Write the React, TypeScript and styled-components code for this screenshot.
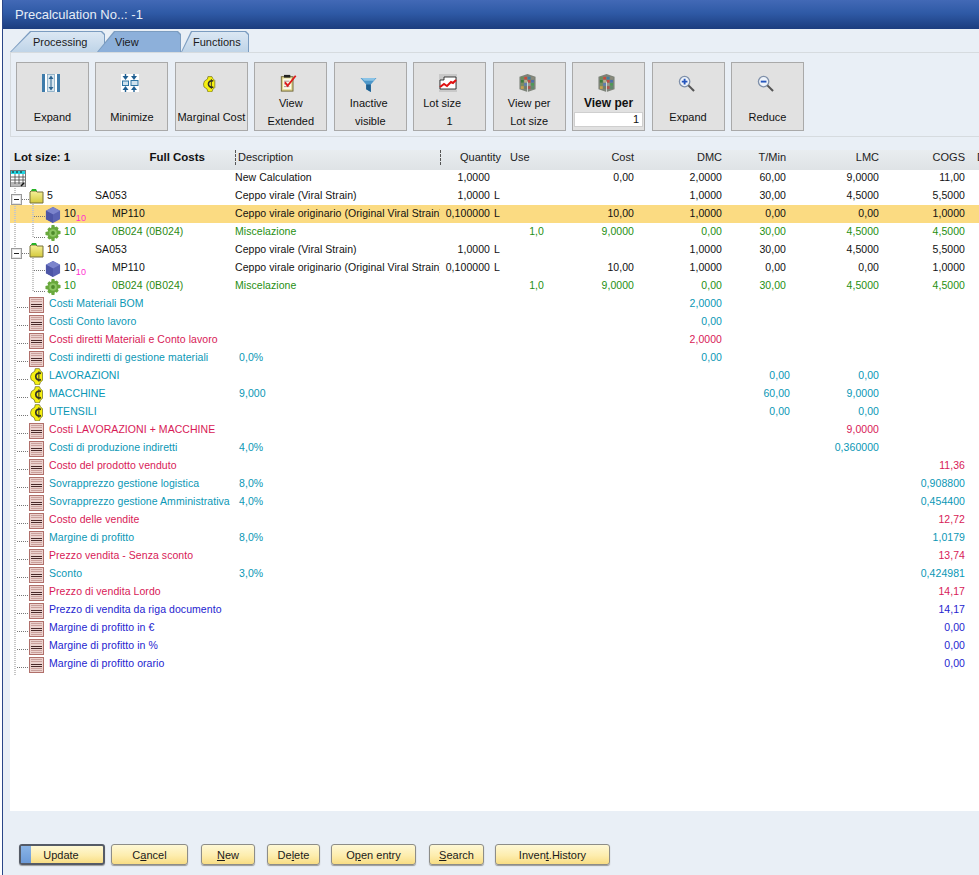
import React from 'react'
import styled, { createGlobalStyle } from 'styled-components'

const GlobalStyle = createGlobalStyle`
    html, body {
        margin: 0;
        padding: 0;
        height: 875px;
        overflow: hidden;
        background: #fff;
        font-family: "Liberation Sans", Arial, sans-serif;
    }
`;

const COLUMNS = '225px 205px 50px 15px 39px 90px 88px 64px 93px 86px 1fr';

const Page = styled.div`
    height: 875px;
    margin-left: 2px;
    border-left: 1px solid #2a4688;
    background: #e9eff6;
    display: flex;
    flex-direction: column;
    overflow: hidden;
`;

const TitleBar = styled.div`
    height: 29px;
    flex: none;
    padding-left: 12px;
    display: flex;
    align-items: center;
    color: #e6edf6;
    font-size: 13px;
    background: linear-gradient(#4269b6, #2f5aa6 45%, #1c3d7e);
`;

const TabStrip = styled.div`
    height: 21px;
    flex: none;
    margin-top: 2px;
    padding-left: 7px;
    display: flex;
    align-items: stretch;
`;

const Tab = styled.div<{ $active?: boolean; $width: number; $overlap?: number; $slant: number; $pad: number }>`
    position: relative;
    width: ${p => p.$width}px;
    margin-left: ${p => -(p.$overlap || 0)}px;
    z-index: ${p => (p.$active ? 2 : 1)};
    background: #7b9cc0;
    clip-path: polygon(0 100%, ${p => p.$slant}px 0, calc(100% - 3px) 0, 100% 3px, 100% 100%);
    font-size: 11px;
    color: #1a1a1a;

    span {
        position: absolute;
        inset: 1px 1px 0 1px;
        display: flex;
        align-items: center;
        padding-left: ${p => p.$pad}px;
        background: ${p => (p.$active ? '#8db0da' : 'linear-gradient(#dbe7f3, #bfd4e8)')};
        clip-path: polygon(0 100%, ${p => p.$slant}px 0, calc(100% - 3px) 0, 100% 3px, 100% 100%);
    }
`;

const ToolPanel = styled.div`
    height: 85px;
    flex: none;
    margin-left: 7px;
    border: 1px solid #d6dbdf;
    border-right: none;
    box-sizing: border-box;
    padding: 9px 0 0 5px;
    display: flex;
    gap: 6.45px;
    align-items: flex-start;
`;

const ToolButton = styled.div`
    width: 73px;
    height: 69px;
    box-sizing: border-box;
    border: 1px solid #a9a9a9;
    background: #e1e1e1;
    display: flex;
    flex-direction: column;
    align-items: center;
    font-size: 11px;
    color: #111;
`;

const IconZone = styled.div`
    height: 31px;
    flex: none;
    padding: 0 4px 2px 0;
    box-sizing: border-box;
    display: flex;
    justify-content: center;
    align-items: flex-end;
`;

const Labels = styled.div<{ $single?: boolean }>`
    padding-top: ${p => (p.$single ? 14 : 0)}px;
    display: flex;
    flex-direction: column;
    align-items: center;
    line-height: 18px;
`;

const LabelLine = styled.div<{ $shift?: number; $bold?: boolean }>`
    margin-left: ${p => p.$shift || 0}px;
    font-weight: ${p => (p.$bold ? 700 : 400)};
    font-size: ${p => (p.$bold ? 12 : 11)}px;
    white-space: nowrap;
`;

const SizeInput = styled.div`
    width: 69px;
    height: 15px;
    background: #fff;
    border: 1px solid #cfcfcf;
    box-sizing: border-box;
    text-align: right;
    padding-right: 3px;
    font-size: 11px;
    line-height: 13px;
`;

const GridArea = styled.div`
    flex: none;
    height: 661px;
    margin: 13px 0 0 7px;
    background: #fff;
    display: flex;
    flex-direction: column;
    overflow: hidden;
`;

const HeaderRow = styled.div`
    height: 20px;
    flex: none;
    display: grid;
    grid-template-columns: ${COLUMNS};
    align-items: start;
    font-size: 11px;
    line-height: 14px;
    color: #222;
    background: linear-gradient(#e9edf0, #dfe3e6);
`;

const HeaderCell = styled.div<{ $right?: boolean; $dash?: boolean; $pad?: number; $over?: number }>`
    text-align: ${p => (p.$right ? 'right' : 'left')};
    white-space: nowrap;
    padding-left: ${p => p.$pad || 0}px;
    margin-right: ${p => -(p.$over || 0)}px;
    ${p => p.$dash && 'border-left: 1px dashed #555; padding-bottom: 1px;'}
`;

const HeaderLead = styled.div`
    display: flex;
    justify-content: space-between;
    padding: 0 30px 0 4px;
    font-weight: 700;
    font-size: 11.5px;
    color: #111;
`;

const RowList = styled.div`
    position: relative;
    margin-top: -2px;
    font-size: 10.5px;
    letter-spacing: .06px;

    &::before {
        content: "";
        position: absolute;
        left: 4px;
        top: 20px;
        width: 2px;
        height: 487px;
        background: repeating-linear-gradient(#c6c6c6 0 1px, transparent 1px 2px);
    }
`;

const Row = styled.div<{ $selected?: boolean; $color?: string }>`
    height: 18px;
    display: grid;
    grid-template-columns: ${COLUMNS};
    align-items: center;
    color: ${p => p.$color || '#111'};
    white-space: nowrap;
    ${p => p.$selected && `
        background: linear-gradient(transparent 1px, #fbdb82 1px);
        box-shadow: 0 1px 0 #fbdb82;
    `}
`;

const NameCell = styled.div<{ $indent: number }>`
    position: relative;
    height: 18px;
    padding-left: ${p => p.$indent}px;
    display: flex;
    align-items: center;
`;

const RowIcon = styled.span<{ $top: number; $width?: number }>`
    display: flex;
    justify-content: center;
    align-items: flex-start;
    height: 18px;
    box-sizing: border-box;
    padding-top: ${p => p.$top}px;
    width: ${p => (p.$width ? `${p.$width}px` : 'auto')};
    position: relative;
    flex: none;
`;

const OrderCell = styled.span<{ $color?: string }>`
    width: 48px;
    margin-left: 3px;
    flex: none;
    color: ${p => p.$color || 'inherit'};
`;

const SubIndex = styled.sub`
    color: #ff2fd0;
    font-size: 9px;
    line-height: 0;
    vertical-align: -4px;
`;

const CodeCell = styled.span<{ $color?: string }>`
    color: ${p => p.$color || 'inherit'};
`;

const SummaryLabel = styled.span`
    margin-left: 5px;
`;

const DescCell = styled.div<{ $color?: string; $pad?: boolean }>`
    overflow: hidden;
    color: ${p => p.$color || 'inherit'};
    padding-left: ${p => (p.$pad ? 4 : 0)}px;
`;

const NumCell = styled.div<{ $color?: string; $outdent?: number }>`
    text-align: right;
    color: ${p => p.$color || 'inherit'};
    margin-right: ${p => -(p.$outdent || 0)}px;
`;

const UnitCell = styled.div`
    padding-left: 4px;
`;

const VLine = styled.i<{ $x: number; $height: number }>`
    position: absolute;
    left: ${p => p.$x}px;
    top: 0;
    width: 2px;
    height: ${p => p.$height}px;
    background: repeating-linear-gradient(#c6c6c6 0 1px, transparent 1px 2px);
`;

const HLine = styled.i<{ $x: number; $width: number; $y: number }>`
    position: absolute;
    left: ${p => p.$x}px;
    top: ${p => p.$y}px;
    width: ${p => p.$width}px;
    height: 1px;
    background: repeating-linear-gradient(90deg, #777 0 1px, transparent 1px 2px);
`;

const ExpandBox = styled.i`
    position: absolute;
    left: 1px;
    top: 8px;
    width: 11px;
    height: 11px;
    box-sizing: border-box;
    background: #fff;
    border: 1px solid #9a9a9a;
    box-shadow: inset 0 0 0 1px #e4e4e4;

    &::after {
        content: "";
        position: absolute;
        left: 2px;
        right: 2px;
        top: 4px;
        height: 1px;
        background: #222;
    }
`;

const Footer = styled.div`
    flex: 1;
    padding: 33px 0 0 16px;
    display: flex;
    align-items: flex-start;
`;

const FootButton = styled.div<{ $width: number; $gap: number; $primary?: boolean }>`
    position: relative;
    width: ${p => p.$width}px;
    height: 21px;
    margin-right: ${p => p.$gap}px;
    box-sizing: border-box;
    border: ${p => (p.$primary ? '2px solid #555b66' : '1px solid #8d8d88')};
    border-radius: 3px;
    background: linear-gradient(#fef8d6, #fdedae 55%, #f8dd84);
    box-shadow: 0 1px 1px #999;
    display: flex;
    align-items: center;
    justify-content: center;
    font-size: 11px;
    color: #1a1a1a;
    ${p => p.$primary && `
        &::before {
            content: "";
            position: absolute;
            left: 0;
            top: 0;
            bottom: 0;
            width: 10px;
            background: linear-gradient(#8ab4e6, #6b9ad8);
        }
    `}
`;

const FootLabel = styled.span<{ $shift?: number }>`
    position: relative;
    margin-left: ${p => p.$shift || 0}px;
`;

/* toolbar icons */
const ExpandIcon = () => (
    <svg width="18" height="18" viewBox="0 0 18 18">
        <rect width="18" height="18" fill="#fff" />
        <rect width="3" height="18" fill="#3f7cab" />
        <rect x="15" width="3" height="18" fill="#3f7cab" />
        <rect x="5.500" y=".5" width="7" height="17" fill="#d8e6ef" stroke="#7fa5bf" strokeWidth=".8" />
        <path d="M9 1.500 6.500 5h5zM9 16.500 6.500 13h5zM8.500 5h1v8h-1z" fill="#2a628f" />
    </svg>
)

const MinimizeIcon = () => (
    <svg width="18" height="18" viewBox="0 0 18 18">
        <rect width="18" height="18" fill="#fff" />
        <path d="M3.800 0h1.400v2h2.300L4.500 6 1.500 2h2.300zM12.300 0h1.400v2H16l-3 4-3-4h2.300zM3.800 18h1.400v-2h2.300l-3-4-3 4h2.300zM12.300 18h1.400v-2H16l-3-4-3 4h2.300z" fill="#1f5f92" />
        <rect x="1.500" y="7" width="6" height="4.500" fill="#cfe2ee" stroke="#2f74a3" />
        <rect x="10" y="6.500" width="7" height="5" fill="#cfe2ee" stroke="#2f74a3" />
    </svg>
)

const CoinIcon = ({ height = 15 }: { height?: number }) => (
    <svg width={height * 0.8} height={height} viewBox="0 0 13 16">
        <path d="M5 .5h4l1 2 2 2v7l-2 2-1 2.500H5l-1-3-3-2-.5-3 1-3 3-2z" fill="#f6f010" stroke="#6a6a20" strokeWidth=".7" />
        <path d="M10.500 5C8 4 5.500 5.500 5.500 8s2.500 4 5 3" fill="none" stroke="#2e2e26" strokeWidth="1.600" />
        <path d="M8.500 3v10" stroke="#2e2e26" strokeWidth=".9" />
    </svg>
)

const ChecklistIcon = () => (
    <svg width="17" height="18" viewBox="0 0 18 20">
        <rect x="1" y="3" width="13" height="16" fill="#e0d68e" stroke="#6b6133" />
        <rect x="3" y="5" width="9" height="12" fill="#fbfae8" />
        <rect x="4" y="1" width="7" height="3" fill="#222" />
        <path d="M4 8h6M4 11h4M4 14h6" stroke="#a88" />
        <path d="M5 9l3 4L17 2" fill="none" stroke="#dd1a1a" strokeWidth="2" />
    </svg>
)

const FunnelIcon = () => (
    <svg width="17" height="15" viewBox="0 0 17 16">
        <path d="M0 1h17l-6 7v8l-5-3V8z" fill="#4d97c9" />
        <path d="M1 1h15l-2 3H4z" fill="#8ac3e6" />
        <path d="M6 8h5v8l-5-3z" fill="#1f5f90" />
    </svg>
)

const ChartIcon = () => (
    <svg width="18" height="18" viewBox="0 0 18 18">
        <rect width="18" height="18" fill="#c9c9c9" />
        <path d="M1 15V6h4V3h12v12z" fill="#fff" stroke="#111" strokeWidth=".8" />
        <path d="M1 13l4-3 3 2 4-4 2 1 3-3" fill="none" stroke="#e01010" strokeWidth="2" />
    </svg>
)

const MOSAIC = [
    '#6a8f5a', '#c94a3a', '#3e7f9e', '#8a8a7a',
    '#3e7d3c', '#b5b08a', '#c24a44', '#4d6fa8',
    '#78905e', '#5b7fb5', '#9a9a8a', '#4a9a55',
    '#c8a24a', '#6e7f6a', '#b0534a', '#5e8a6c',
]

const MosaicIcon = () => (
    <svg width="17" height="18" viewBox="0 0 17 19">
        <path d="M8.500 0 17 3v13l-8.500 3L0 16V3z" fill="#7d8379" />
        {MOSAIC.map((color, i) => (
            <rect key={i} x={1.500 + (i % 4) * 3.600} y={3 + Math.floor(i / 4) * 3.300} width="3" height="2.800" fill={color} />
        ))}
        <path d="M8.500 8v11" stroke="#eee" strokeWidth=".8" />
    </svg>
)

const LensIcon = ({ minus }: { minus?: boolean }) => (
    <svg width="17" height="17" viewBox="0 0 18 18">
        <circle cx="7" cy="7" r="5.500" fill="#eef3fa" stroke="#7f90aa" strokeWidth="1.400" />
        <path d="M11 11l6 6" stroke="#555" strokeWidth="2.200" />
        <path d={minus ? 'M4 7h6' : 'M4 7h6M7 4v6'} stroke="#2455bd" strokeWidth="2" />
    </svg>
)

/* tree icons */
const GridIcon = () => (
    <svg width="16" height="17" viewBox="0 0 16 17">
        <rect x=".5" y=".5" width="15" height="16" fill="#fff" stroke="#777" />
        <rect x="1" y="1" width="14" height="3" fill="#22d4e0" />
        <path d="M2 2h2M6 2h2M10 2h2" stroke="#111" />
        <path d="M1 7h14M1 10h14M1 13h14M5 4v10M9 4v10M13 4v10" stroke="#444" strokeWidth=".8" />
        <rect x="1" y="14" width="14" height="2.500" fill="#bbb" />
        <path d="M11 16l3-3" stroke="#111" strokeWidth="1.500" />
    </svg>
)

const FolderIcon = () => (
    <svg width="15" height="16" viewBox="0 0 15 16">
        <defs>
            <linearGradient id="folderFill" x1="0" y1="0" x2="0" y2="1">
                <stop offset="0" stopColor="#f7f19a" />
                <stop offset="1" stopColor="#d4c93c" />
            </linearGradient>
        </defs>
        <path d="M1 4l1-1h5l1 1h6v11H1z" fill="url(#folderFill)" stroke="#77713a" />
        <path d="M2 3l1-2h4l1 2z" fill="#27b327" />
    </svg>
)

const CubeIcon = () => (
    <svg width="16" height="16" viewBox="0 0 16 17">
        <path d="M8 0l7.500 4v9L8 17 .5 13V4z" fill="#5a63b3" />
        <path d="M8 0l7.500 4L8 8 .5 4z" fill="#7b84cc" />
        <path d="M8 8v9L.5 13V4z" fill="#4c55a6" />
    </svg>
)

const GearIcon = () => (
    <svg width="16" height="16" viewBox="0 0 16 17">
        <path d="M6.500 0h3l.5 2.500 2-1 2 2-1 2.200 3 .8v3l-3 .8 1 2.200-2 2-2-1-.5 3.500h-3L6 14.500l-2 1-2-2 1-2.200-3-.8v-3l3-.8-1-2.200 2-2 2 1z" fill="#68a83c" />
        <circle cx="8" cy="8.500" r="4" fill="#8cc663" />
        <circle cx="8" cy="8.500" r="2" fill="#4e8b2b" />
    </svg>
)

const LedgerIcon = () => (
    <svg width="15" height="16" viewBox="0 0 15 16">
        <rect x=".5" y=".5" width="14" height="15" fill="#ecd2ce" stroke="#b0706b" />
        <path d="M2 2.500h11M2 4.500h11M2 11.500h11M2 13.500h11" stroke="#c9a09c" />
        <path d="M2 7.500h11M2 9.500h11" stroke="#4a2a2a" />
    </svg>
)

type Cells = Partial<Record<'qty' | 'unit' | 'use' | 'cost' | 'dmc' | 'tmin' | 'lmc' | 'cogs', string>>

interface ITreeRow extends Cells {
    level: 0 | 1;
    icon: 'folder' | 'cube' | 'gear';
    order: string;
    sub?: string;
    code: string;
    desc: string;
    selected?: boolean;
}

interface ISummaryRow extends Cells {
    icon: 'ledger' | 'coin';
    label: string;
    pct?: string;
    color: string;
}

const GREEN = '#1f8f12';
const TEAL = '#0a97b5';
const RED = '#d81a57';
const BLUE = '#2424cf';

const strain = 'Ceppo virale (Viral Strain)'
const origin = 'Ceppo virale originario (Original Viral Strain)'

const treeRows: ITreeRow[] = [
    { level: 0, icon: 'folder', order: '5', code: 'SA053', desc: strain, qty: '1,0000', unit: 'L', dmc: '1,0000', tmin: '30,00', lmc: '4,5000', cogs: '5,5000' },
    { level: 1, icon: 'cube', order: '10', sub: '10', code: 'MP110', desc: origin, qty: '0,100000', unit: 'L', cost: '10,00', dmc: '1,0000', tmin: '0,00', lmc: '0,00', cogs: '1,0000', selected: true },
    { level: 1, icon: 'gear', order: '10', code: '0B024 (0B024)', desc: 'Miscelazione', use: '1,0', cost: '9,0000', dmc: '0,00', tmin: '30,00', lmc: '4,5000', cogs: '4,5000' },
    { level: 0, icon: 'folder', order: '10', code: 'SA053', desc: strain, qty: '1,0000', unit: 'L', dmc: '1,0000', tmin: '30,00', lmc: '4,5000', cogs: '5,5000' },
    { level: 1, icon: 'cube', order: '10', sub: '10', code: 'MP110', desc: origin, qty: '0,100000', unit: 'L', cost: '10,00', dmc: '1,0000', tmin: '0,00', lmc: '0,00', cogs: '1,0000' },
    { level: 1, icon: 'gear', order: '10', code: '0B024 (0B024)', desc: 'Miscelazione', use: '1,0', cost: '9,0000', dmc: '0,00', tmin: '30,00', lmc: '4,5000', cogs: '4,5000' },
]

const summaryRows: ISummaryRow[] = [
    { icon: 'ledger', label: 'Costi Materiali BOM', color: TEAL, dmc: '2,0000' },
    { icon: 'ledger', label: 'Costi Conto lavoro', color: TEAL, dmc: '0,00' },
    { icon: 'ledger', label: 'Costi diretti Materiali e Conto lavoro', color: RED, dmc: '2,0000' },
    { icon: 'ledger', label: 'Costi indiretti di gestione materiali', pct: '0,0%', color: TEAL, dmc: '0,00' },
    { icon: 'coin', label: 'LAVORAZIONI', color: TEAL, tmin: '0,00', lmc: '0,00' },
    { icon: 'coin', label: 'MACCHINE', pct: '9,000', color: TEAL, tmin: '60,00', lmc: '9,0000' },
    { icon: 'coin', label: 'UTENSILI', color: TEAL, tmin: '0,00', lmc: '0,00' },
    { icon: 'ledger', label: 'Costi LAVORAZIONI + MACCHINE', color: RED, lmc: '9,0000' },
    { icon: 'ledger', label: 'Costi di produzione indiretti', pct: '4,0%', color: TEAL, lmc: '0,360000' },
    { icon: 'ledger', label: 'Costo del prodotto venduto', color: RED, cogs: '11,36' },
    { icon: 'ledger', label: 'Sovrapprezzo gestione logistica', pct: '8,0%', color: TEAL, cogs: '0,908800' },
    { icon: 'ledger', label: 'Sovrapprezzo gestione Amministrativa', pct: '4,0%', color: TEAL, cogs: '0,454400' },
    { icon: 'ledger', label: 'Costo delle vendite', color: RED, cogs: '12,72' },
    { icon: 'ledger', label: 'Margine di profitto', pct: '8,0%', color: TEAL, cogs: '1,0179' },
    { icon: 'ledger', label: 'Prezzo vendita - Senza sconto', color: RED, cogs: '13,74' },
    { icon: 'ledger', label: 'Sconto', pct: '3,0%', color: TEAL, cogs: '0,424981' },
    { icon: 'ledger', label: 'Prezzo di vendita Lordo', color: RED, cogs: '14,17' },
    { icon: 'ledger', label: 'Prezzo di vendita da riga documento', color: BLUE, cogs: '14,17' },
    { icon: 'ledger', label: 'Margine di profitto in €', color: BLUE, cogs: '0,00' },
    { icon: 'ledger', label: 'Margine di profitto in %', color: BLUE, cogs: '0,00' },
    { icon: 'ledger', label: 'Margine di profitto orario', color: BLUE, cogs: '0,00' },
]

const treeIcons = { folder: <FolderIcon />, cube: <CubeIcon />, gear: <GearIcon /> }

const TreeRow: React.FC<{ row: ITreeRow }> = ({ row }) => {
    const green = row.icon === 'gear'
    const tint = green ? GREEN : undefined
    return (
        <Row $selected={row.selected}>
            <NameCell $indent={row.level === 0 ? 19 : 35}>
                {row.level === 0 ? (
                    <>
                        <HLine $x={12} $width={7} $y={13} />
                        <ExpandBox />
                    </>
                ) : (
                    <>
                        <VLine $x={22} $height={green ? 15 : 18} />
                        <HLine $x={24} $width={11} $y={green ? 15 : 12} />
                    </>
                )}
                <RowIcon $top={row.level === 0 ? 2 : 3}>{treeIcons[row.icon]}</RowIcon>
                <OrderCell $color={tint}>
                    {row.order}
                    {row.sub && <SubIndex>{row.sub}</SubIndex>}
                </OrderCell>
                <CodeCell $color={green ? '#2c8a14' : undefined}>{row.code}</CodeCell>
            </NameCell>
            <DescCell $color={tint}>{row.desc}</DescCell>
            <NumCell>{row.qty}</NumCell>
            <UnitCell>{row.unit}</UnitCell>
            <NumCell $color={tint}>{row.use}</NumCell>
            <NumCell $color={tint}>{row.cost}</NumCell>
            <NumCell $color={tint}>{row.dmc}</NumCell>
            <NumCell $color={tint}>{row.tmin}</NumCell>
            <NumCell $color={tint}>{row.lmc}</NumCell>
            <NumCell $color={tint}>{row.cogs}</NumCell>
        </Row>
    )
}

const SummaryRow: React.FC<{ row: ISummaryRow }> = ({ row }) => (
    <Row $color={row.color}>
        <NameCell $indent={19}>
            <HLine $x={7} $width={12} $y={13} />
            <RowIcon $top={row.icon === 'ledger' ? 3 : 2} $width={15}>
                {row.icon === 'ledger' ? <LedgerIcon /> : <CoinIcon height={17} />}
            </RowIcon>
            <SummaryLabel>{row.label}</SummaryLabel>
        </NameCell>
        <DescCell $pad>{row.pct}</DescCell>
        <NumCell />
        <UnitCell />
        <NumCell />
        <NumCell />
        <NumCell>{row.dmc}</NumCell>
        <NumCell $outdent={4}>{row.tmin}</NumCell>
        <NumCell>{row.lmc}</NumCell>
        <NumCell>{row.cogs}</NumCell>
    </Row>
)

export default function App() {
    return (
        <Page>
            <GlobalStyle />
            <TitleBar>Precalculation No..: -1</TitleBar>
            <TabStrip>
                <Tab $width={95} $slant={20} $pad={22}><span>Processing</span></Tab>
                <Tab $width={84} $overlap={8} $active $slant={17} $pad={17}><span>View</span></Tab>
                <Tab $width={68} $slant={10} $pad={11}><span>Functions</span></Tab>
            </TabStrip>
            <ToolPanel>
                <ToolButton>
                    <IconZone><ExpandIcon /></IconZone>
                    <Labels $single><LabelLine>Expand</LabelLine></Labels>
                </ToolButton>
                <ToolButton>
                    <IconZone><MinimizeIcon /></IconZone>
                    <Labels $single><LabelLine>Minimize</LabelLine></Labels>
                </ToolButton>
                <ToolButton>
                    <IconZone><CoinIcon height={16} /></IconZone>
                    <Labels $single><LabelLine>Marginal Cost</LabelLine></Labels>
                </ToolButton>
                <ToolButton>
                    <IconZone><ChecklistIcon /></IconZone>
                    <Labels><LabelLine>View</LabelLine><LabelLine>Extended</LabelLine></Labels>
                </ToolButton>
                <ToolButton>
                    <IconZone><FunnelIcon /></IconZone>
                    <Labels><LabelLine $shift={-3}>Inactive</LabelLine><LabelLine>visible</LabelLine></Labels>
                </ToolButton>
                <ToolButton>
                    <IconZone><ChartIcon /></IconZone>
                    <Labels><LabelLine $shift={-15}>Lot size</LabelLine><LabelLine>1</LabelLine></Labels>
                </ToolButton>
                <ToolButton>
                    <IconZone><MosaicIcon /></IconZone>
                    <Labels><LabelLine>View per</LabelLine><LabelLine>Lot size</LabelLine></Labels>
                </ToolButton>
                <ToolButton>
                    <IconZone><MosaicIcon /></IconZone>
                    <Labels><LabelLine $bold>View per</LabelLine><SizeInput>1</SizeInput></Labels>
                </ToolButton>
                <ToolButton>
                    <IconZone><LensIcon /></IconZone>
                    <Labels $single><LabelLine>Expand</LabelLine></Labels>
                </ToolButton>
                <ToolButton>
                    <IconZone><LensIcon minus /></IconZone>
                    <Labels $single><LabelLine>Reduce</LabelLine></Labels>
                </ToolButton>
            </ToolPanel>
            <GridArea>
                <HeaderRow>
                    <HeaderLead><span>Lot size: 1</span><span>Full Costs</span></HeaderLead>
                    <HeaderCell $dash $pad={2}>Description</HeaderCell>
                    <HeaderCell $dash $right $over={11}>Quantity</HeaderCell>
                    <span />
                    <HeaderCell $pad={5}>Use</HeaderCell>
                    <HeaderCell $right>Cost</HeaderCell>
                    <HeaderCell $right>DMC</HeaderCell>
                    <HeaderCell $right>T/Min</HeaderCell>
                    <HeaderCell $right>LMC</HeaderCell>
                    <HeaderCell $right>COGS</HeaderCell>
                    <HeaderCell $pad={12}>D</HeaderCell>
                </HeaderRow>
                <RowList>
                    <Row>
                        <NameCell $indent={0}><RowIcon $top={2}><GridIcon /></RowIcon></NameCell>
                        <DescCell>New Calculation</DescCell>
                        <NumCell>1,0000</NumCell>
                        <UnitCell />
                        <NumCell />
                        <NumCell>0,00</NumCell>
                        <NumCell>2,0000</NumCell>
                        <NumCell>60,00</NumCell>
                        <NumCell>9,0000</NumCell>
                        <NumCell>11,00</NumCell>
                    </Row>
                    {treeRows.map((row, i) => <TreeRow key={i} row={row} />)}
                    {summaryRows.map(row => <SummaryRow key={row.label} row={row} />)}
                </RowList>
            </GridArea>
            <Footer>
                <FootButton $primary $width={86} $gap={6}><FootLabel $shift={-2}>Update</FootLabel></FootButton>
                <FootButton $width={77} $gap={13}><FootLabel>C<u>a</u>ncel</FootLabel></FootButton>
                <FootButton $width={54} $gap={12}><FootLabel><u>N</u>ew</FootLabel></FootButton>
                <FootButton $width={53} $gap={11}><FootLabel>De<u>l</u>ete</FootLabel></FootButton>
                <FootButton $width={85} $gap={13}><FootLabel>O<u>p</u>en entry</FootLabel></FootButton>
                <FootButton $width={55} $gap={11}><FootLabel><u>S</u>earch</FootLabel></FootButton>
                <FootButton $width={115} $gap={0}><FootLabel>Inven<u>t</u>.History</FootLabel></FootButton>
            </Footer>
        </Page>
    )
}
